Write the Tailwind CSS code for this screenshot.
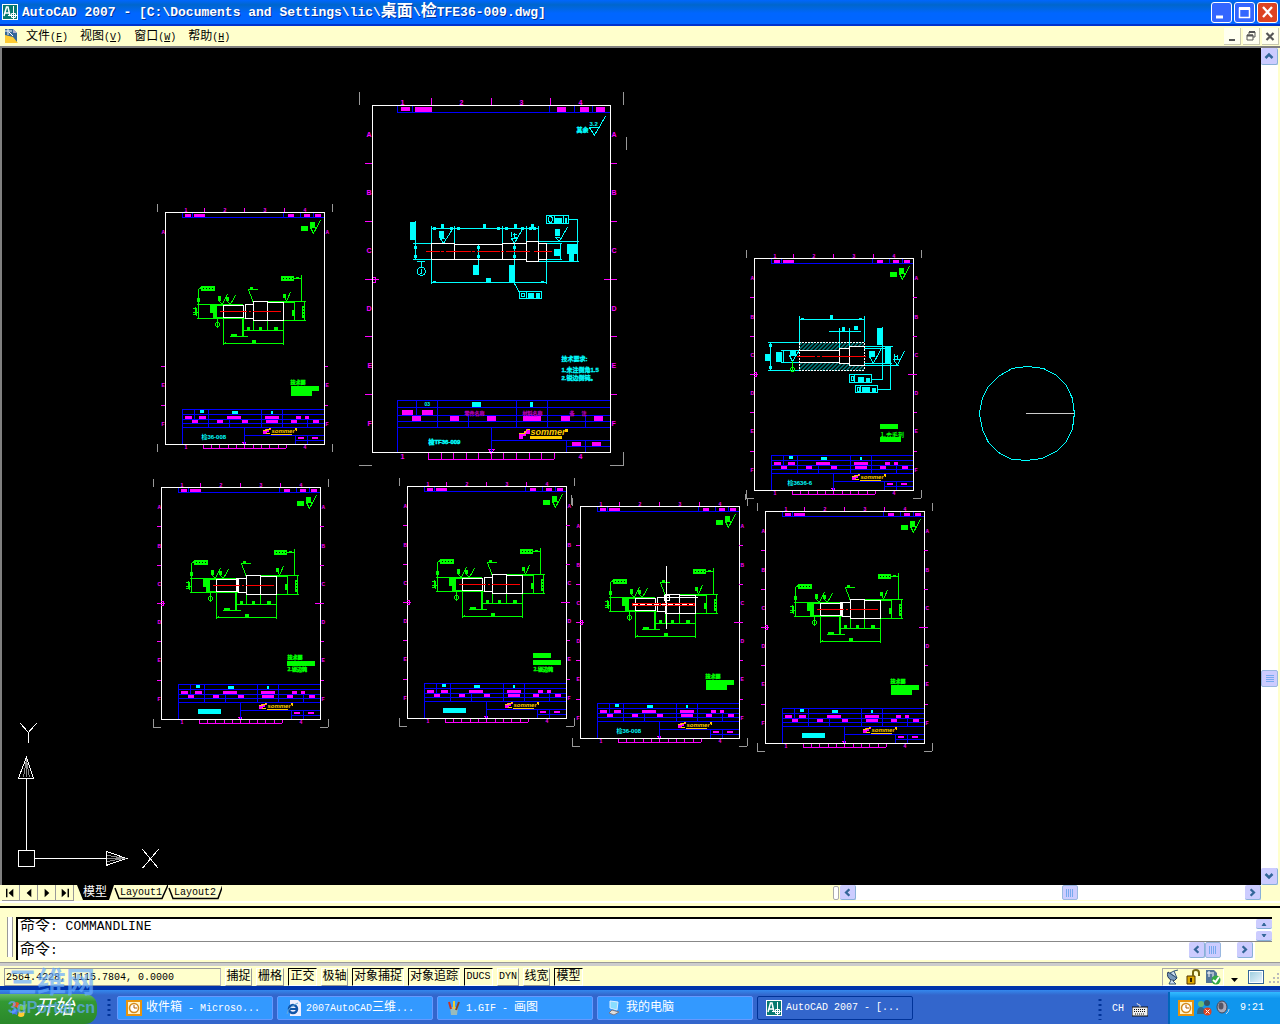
<!DOCTYPE html>
<html lang="zh-CN">
<head>
<meta charset="utf-8">
<title>AutoCAD 2007</title>
<script src="https://cdn.jsdelivr.net/npm/@tailwindcss/browser@4"></script>
</head>
<body class="flex h-screen min-h-[480px] flex-col overflow-hidden bg-[#ffffcc] font-['Liberation_Mono','Noto_Sans_CJK_SC',monospace] text-[10px] leading-4 text-black">

<!-- shared glyphs and drawing blocks -->
<svg class="absolute h-0 w-0" aria-hidden="true">
  <defs>
    <symbol id="acad" viewBox="0 0 16 16">
      <rect width="16" height="16" fill="#fff"/><rect x="1" y="1" width="14" height="14" fill="#067a70"/>
      <path d="M2 12L4.500 3H6L8 12M3 9H7" fill="none" stroke="#fff" stroke-width="1.500"/>
      <path d="M11.500 2V15M6 11.500H15M9.500 9.500H13.500V13.500H9.500Z" fill="none" stroke="#fff" stroke-width="1"/>
    </symbol>
    <symbol id="clock" viewBox="0 0 16 16">
      <rect width="16" height="16" fill="#e8930c"/><rect x="2" y="2" width="12" height="12" fill="#fff3c8"/>
      <circle cx="8" cy="8" r="4.500" fill="#fff" stroke="#d48a1c" stroke-width="1.500"/><path d="M8 5V8H11" fill="none" stroke="#b05a00"/>
    </symbol>
    <pattern id="hatch" width="4" height="4" patternUnits="userSpaceOnUse"><path d="M-1 1L1 -1M0 4L4 0M3 5L5 3" stroke="#0ff" stroke-width="1"/></pattern>

    <g id="logo">
      <path d="M98 222V219H100V217H104V216H106V218H104V220H102V222Z" fill="#f0f" stroke="none"/>
      <path d="M98 218H101V217H104V216H106M101 221H105" stroke="#fc0"/>
      <text x="106" y="221" fill="#fc0" stroke="none" font-size="6" font-style="italic" font-weight="bold" font-family="Liberation Sans">sommer</text>
      <path d="M106 222H127M131 216V219M130 216V218" stroke="#fc0"/>
    </g>

    <g id="sheet">
      <g stroke="#f0f">
        <path d="M39 -4V0M79 -4V0M119 -4V0M-4 154H0M-4 193H0M159 154H163M159 193H163M38 236H121"/>
        <path d="M38 233V236M46 233V236M54 233V236M63 233V236M71 233V236M79 233V236M88 233V236M96 233V236M104 233V236M113 233V236M121 233V236M77 230H81M78 231L79 233L80 231"/>
      </g>
      <g fill="#f0f" font-size="5" font-weight="bold" font-family="Liberation Sans">
        <text x="19" y="0">1</text><text x="58" y="0">2</text><text x="98" y="0">3</text><text x="138" y="0">4</text>
        <text x="19" y="237">1</text><text x="138" y="237">4</text>
        <text x="-4" y="22">A</text><text x="160" y="22">A</text><text x="-4" y="175">E</text><text x="160" y="175">E</text><text x="-4" y="214">F</text><text x="160" y="214">F</text>
      </g>
      <path d="M-8 -8V0M167 -8V0M-8 232V240M167 232V240" stroke="#999"/>
      <g stroke="#00f">
        <path d="M17 5H159M17 1V5M27 1V5M118 1V5M135 1V5M148 1V5"/>
        <path d="M17 232V197H159M17 202H159M17 207H159M17 211H159M17 215H159M29 197V207M43 197V215M64 207V215M96 197V215M117 197V215M142 207V215M79 215V232M79 223H159M130 223V232M130 228H159M142 223V232"/>
      </g>
      <path d="M0 0H159V232H0Z" stroke="#fff"/>
      <path fill="#f0f" d="M20 2h6v3h-6zM29 2h11v3h-11zM123 2h6v3h-6zM139 2h6v3h-6zM150 2h6v3h-6zM20 204h7v3h-7zM34 204h7v3h-7zM62 204h14v3h-14zM100 204h14v3h-14zM131 204h5v3h-5zM140 204h4v3h-4zM27 208h6v3h-6zM52 208h6v3h-6zM77 208h6v3h-6zM101 208h12v3h-12zM126 208h6v3h-6zM148 208h6v3h-6zM133 225h6v2h-6zM147 225h6v2h-6z"/>
      <path fill="#0ff" d="M35 198h4v3h-4zM67 199h6v3h-6zM106 199h2v3h-2z"/>
      <use href="#logo"/>
      <path fill="#0f0" d="M136 14h7v5h-7zM145 10h5v5h-5z"/>
      <path stroke="#0f0" d="M151 15H145L148 21L155 8"/>
    </g>

    <g id="zones">
      <path stroke="#f0f" d="M-4 39H0M-4 78H0M-4 116H4M159 39H163M159 78H163M154 116H163M0 114H2V118H0"/>
      <g fill="#f0f" font-size="5" font-weight="bold" font-family="Liberation Sans">
        <text x="-4" y="61">B</text><text x="160" y="61">B</text><text x="-4" y="99">C</text><text x="160" y="99">C</text><text x="-4" y="137">D</text><text x="160" y="137">D</text>
      </g>
    </g>
    <path id="corners" stroke="#999" d="M-8 240H0M159 240H167"/>

    <g id="shaft">
      <g stroke="#0f0">
        <path d="M29 91H75M29 105H77M45 92H56M45 104H74M30 91V105M30 91V76L33 74M51 88L54 91L59 81M59 88L62 91L67 82M90 76H80L85 89M117 85L118 88L122 79M126 65H133M133 62V88M99 88H138M104 89H126M115 107H138M126 88V107M136 88V107"/>
        <path d="M49 105V115M55 105V132M115 107V132M55 130H115M75 117H115M85 107V118M99 107V118M62 123H80M74 105V124M75 105V124M25 95H29M25 99H30M27 94V102M28 96V103M25 101H28"/>
        <circle cx="49" cy="111" r="2"/>
      </g>
      <path fill="#0f0" d="M42 91h7v9h-7zM45 91h4v14h-4zM50 83h3v5h-3zM58 84h3v4h-3zM82 74h3v2h-3zM115 81h3v4h-3zM113 63h13v5h-13zM33 73h14v5h-14zM124 97h2v6h-2zM134 93h3v12h-3zM29 85h3v4h-3zM84 127h4v3h-4zM79 114h3v3h-3zM91 114h3v3h-3zM106 114h4v3h-4zM63 121h6v3h-6zM128 64h3v2h-3zM57 129h1v2h-1z"/>
      <path stroke="#000" stroke-dasharray="1 2" d="M35 75H46M115 65H125M135 95V104"/>
      <path stroke="#fff" d="M55 92H75V104H55ZM77 91H85V105H77ZM85 88H99V107H85ZM99 89H115V107H99Z"/>
    </g>
    <path id="collar" fill="#fff" d="M75 91h3v14h-3z"/>
    <path id="axis" stroke="#f00" d="M52 98H79M81 98H83M85 98H113"/>
    <g id="notes">
      <text x="125" y="172" font-size="5" font-weight="bold" fill="#0f0" stroke="#0f0" stroke-width=".4" font-family="Noto Sans CJK SC">技术要</text>
      <path fill="#0f0" d="M126 174h28v5h-28zM126 179h21v5h-21z"/>
    </g>
    <path id="up" d="M4.500 10L8 6.500L11.500 10" fill="none" stroke="#336699" stroke-width="2.500"/>
  </defs>
</svg>

<header class="flex h-[26px] shrink-0 items-center border-b-2 border-[#0033cc] bg-linear-to-b from-[#0066ff] via-[#0066cc] via-20% to-[#0066ff] to-55% pr-0.5 pl-0.5 text-white">
  <svg class="h-4 w-4"><use href="#acad"/></svg>
  <h1 class="ml-1 flex-1 truncate text-[13px] leading-5 font-bold whitespace-pre [text-shadow:1px_1px_#003399]">AutoCAD 2007 - [C:\Documents and Settings\lic\<span class="text-[16px]">桌面</span>\<span class="text-[16px]">检</span>TFE36-009.dwg]</h1>
  <div class="flex gap-0.5">
    <button aria-label="最小化" class="h-[21px] w-[21px] rounded-[3px] border border-white bg-[#3366ff]"><svg viewBox="0 0 19 19"><path d="M4 14H11" stroke="#fff" stroke-width="3"/></svg></button>
    <button aria-label="最大化" class="h-[21px] w-[21px] rounded-[3px] border border-white bg-[#3366ff]"><svg viewBox="0 0 19 19"><path d="M4.500 5.500H14.500V14.500H4.500ZM4 5H15" fill="none" stroke="#fff" stroke-width="1.500"/><path d="M4 5.500H15" stroke="#fff" stroke-width="3"/></svg></button>
    <button aria-label="关闭" class="h-[21px] w-[21px] rounded-[3px] border border-white bg-[#dd4422]"><svg viewBox="0 0 19 19"><path d="M5 4L14 14M14 4L5 14" stroke="#fff" stroke-width="2.300"/></svg></button>
  </div>
</header>

<nav class="flex h-5 shrink-0 items-center pl-1 text-[10px]">
  <svg class="h-4 w-4" viewBox="0 0 16 16"><path d="M1 1H9L13 5V15H1Z" fill="#336699"/><path d="M9 1L13 5H9Z" fill="#aac"/><path d="M1 7L9 9L14 15H1Z" fill="#ffcc33"/><path d="M4 1V7M1 3H8M5 4L9 8" stroke="#fff" fill="none"/></svg>
  <ul class="ml-1.5 flex flex-1 gap-3 pt-0.5">
    <li><button><span class="text-xs">文件</span>(<u>F</u>)</button></li>
    <li><button><span class="text-xs">视图</span>(<u>V</u>)</button></li>
    <li><button><span class="text-xs">窗口</span>(<u>W</u>)</button></li>
    <li><button><span class="text-xs">帮助</span>(<u>H</u>)</button></li>
  </ul>
  <div class="flex gap-0.5 pr-px">
    <button aria-label="最小化文档" class="h-[17px] w-[17px] border-r border-b border-[#c8c8b0] bg-[#fffff0]"><svg viewBox="0 0 16 16"><path d="M5 12H11" stroke="#555" stroke-width="2"/></svg></button>
    <button aria-label="还原文档" class="h-[17px] w-[17px] border-r border-b border-[#c8c8b0] bg-[#fffff0]"><svg viewBox="0 0 16 16"><path d="M6 6V4H12V9H10M4 7H10V12H4Z" fill="none" stroke="#555"/><path d="M6 4H12M4 7.500H10" stroke="#555" stroke-width="2"/></svg></button>
    <button aria-label="关闭文档" class="h-[17px] w-[17px] border-r border-b border-[#c8c8b0] bg-[#fffff0]"><svg viewBox="0 0 16 16"><path d="M4.500 5L11.500 12M11.500 5L4.500 12" stroke="#555" stroke-width="2.200"/></svg></button>
  </div>
</nav>

<main class="flex min-h-0 flex-1 border-t-2 border-l-2 border-[#808080] pr-0.5">
  <svg id="sheets" class="min-w-0 flex-1 bg-black" role="img" aria-label="模型空间" fill="none" shape-rendering="crispEdges">
    <g transform="translate(-1.6 -47.6)">
      <!-- half-size inspection sheets -->
      <g transform="translate(165 212)">
        <use href="#sheet"/><use href="#shaft" x="3" y="1"/><use href="#axis" x="3" y="1"/><use href="#notes"/>
        <text x="36" y="227" font-size="6" font-weight="bold" fill="#0ff" font-family="Liberation Sans, Noto Sans CJK SC">检36-008</text>
      </g>
      <g transform="translate(161 487)">
        <use href="#sheet"/><use href="#zones"/><use href="#corners"/><use href="#shaft"/><use href="#collar"/><use href="#axis"/>
        <text x="126" y="172" font-size="5" font-weight="bold" fill="#0f0" stroke="#0f0" stroke-width=".4" font-family="Noto Sans CJK SC">技术要</text>
        <text x="126" y="184" font-size="5" font-weight="bold" fill="#0f0" stroke="#0f0" stroke-width=".4" font-family="Noto Sans CJK SC">2.锐边钝</text>
        <path fill="#0f0" d="M126 174h28v5h-28z"/><path fill="#0ff" d="M37 222h23v5h-23z"/>
      </g>
      <g transform="translate(407 486)">
        <use href="#sheet"/><use href="#zones"/><use href="#corners"/><use href="#shaft"/><use href="#axis"/>
        <text x="126" y="185" font-size="5" font-weight="bold" fill="#0f0" stroke="#0f0" stroke-width=".4" font-family="Noto Sans CJK SC">2.锐边钝</text>
        <path fill="#0f0" d="M126 167h18v5h-18zM126 174h28v5h-28z"/><path fill="#0ff" d="M36 222h23v5h-23z"/>
      </g>
      <g transform="translate(580 506)">
        <use href="#sheet"/><use href="#zones"/><use href="#corners"/><use href="#shaft"/><use href="#notes"/>
        <path stroke="#f00" d="M52 97H80V99H52ZM82 97H114V99H82Z"/><path stroke="#fff" stroke-dasharray="5 2" d="M53 98H113"/>
        <text x="36" y="227" font-size="6" font-weight="bold" fill="#0ff" font-family="Liberation Sans, Noto Sans CJK SC">检36-008</text>
      </g>
      <g transform="translate(765 511)">
        <use href="#sheet"/><use href="#zones"/><use href="#corners"/><use href="#shaft"/><use href="#collar"/><use href="#axis"/><use href="#notes"/>
        <path fill="#0ff" d="M37 222h23v5h-23z"/>
      </g>

      <!-- sleeve sheet -->
      <g transform="translate(754 258)">
        <use href="#sheet"/><use href="#zones"/><use href="#corners"/>
        <path fill="#0f0" d="M126 166h18v5h-18zM126 179h21v5h-21z"/>
        <text x="126" y="179" font-size="6" font-weight="bold" fill="#0f0" font-family="Noto Sans CJK SC">1.去毛刺</text>
        <text x="33" y="227" font-size="6" font-weight="bold" fill="#0ff" font-family="Liberation Sans, Noto Sans CJK SC">检3636-6</text>
      </g>
      <path fill="url(#hatch)" d="M799 342h65v5h-15v2h-10v2h-40zM799 362h40v2h10v2h15v5h-65z"/>
      <g stroke="#0ff">
        <path d="M799 319H864M799 316V342M864 316V342M829 331H861M839 328V348M849 328V346M768 342H799M768 370H799M770 342V370M781 350H799M781 362H799M783 350V362M789 355H796M789 355L792 361L799 350"/>
        <path d="M882 327V379H872M849 374H871V382H849ZM855 385H877V392H855ZM877 389H890V346M864 346H893M864 365H899M864 348H885M864 363H892M869 356H875M869 356L873 363L881 348M893 359H900M893 359L897 365L904 351M894 354V359M897 355V359M895 356H898M854 374V382M851 376H853V380H851ZM860 385V392M857 387H859V391H857Z"/>
      </g>
      <path fill="#0ff" d="M830 315h3v4h-3zM842 327h3v4h-3zM854 326h4v4h-4zM765 354h6v7h-6zM776 352h6v10h-6zM790 350h6v5h-6zM877 328h5v17h-5zM885 347h6v17h-6zM869 351h6v5h-6zM858 377h6v5h-6zM866 378h4v4h-4zM862 387h8v5h-8zM872 388h4v4h-4zM769 344h3v3h-3zM769 366h3v3h-3zM801 318h3v2h-3zM859 318h3v2h-3z"/>
      <path stroke="#fff" d="M799 350H839M799 362H839M839 348V363M839 348H849M839 363H849M849 346V365M849 346H864M849 365H864"/>
      <path stroke="#fff" stroke-dasharray="2 1" d="M799 342H864V370H799Z"/>
      <path stroke="#f00" d="M797 356H815M817 356H820M822 356H866"/>
      <g stroke="#0f0"><circle cx="792" cy="369" r="2"/><path d="M792 361V372"/></g>

      <!-- main shaft sheet -->
      <path stroke="#999" d="M359 92V105M623 92V105M626 137V150M359 465H372M610 465H623V452M571 495V505M745 500V494"/>
      <g stroke="#f0f">
        <path d="M431 98V105M491 98V105M550 98V105M365 163H372M365 221H372M365 279H379M365 336H372M365 394H372M611 163H617M611 221H617M604 279H617M611 336H617M611 394H617M372 277H375V282H372"/>
        <path d="M428 459H554M428 453V459M441 453V459M453 453V459M466 453V459M478 453V459M491 453V459M503 453V459M516 453V459M529 453V459M541 453V459M554 453V459M488 449H495M489 450L491 454L493 450"/>
      </g>
      <g fill="#f0f" font-size="7" font-weight="bold" font-family="Liberation Sans">
        <text x="400" y="105">1</text><text x="459" y="105">2</text><text x="519" y="105">3</text><text x="578" y="105">4</text><text x="400" y="459">1</text><text x="578" y="459">4</text>
        <text x="366" y="137">A</text><text x="366" y="195">B</text><text x="366" y="253">C</text><text x="366" y="311">D</text><text x="367" y="368">E</text><text x="367" y="426">F</text>
        <text x="611" y="137">A</text><text x="611" y="195">B</text><text x="611" y="253">C</text><text x="611" y="311">D</text><text x="611" y="368">E</text><text x="611" y="426">F</text>
      </g>
      <path stroke="#00f" d="M397 112H610M397 106V112M412 106V112M549 106V112M574 106V112M592 106V112M397 452V400H610M397 407H610M397 415H610M397 421H610M397 427H610M416 400V415M437 400V427M468 415V427M516 400V427M547 400V427M585 415V427M491 427V452M491 440H610M566 440V452M566 446H610M585 440V452"/>
      <path stroke="#fff" d="M372 105H610V452H372Z"/>
      <path fill="#f0f" d="M401 107h9v4h-9zM415 107h17v5h-17zM557 107h9v5h-9zM580 107h9v5h-9zM596 107h9v5h-9zM402 410h11v5h-11zM422 410h11v5h-11zM412 416h9v5h-9zM450 416h9v5h-9zM487 416h9v5h-9zM523 416h18v5h-18zM561 416h9v5h-9zM594 416h9v5h-9zM572 442h9v4h-9zM592 442h9v4h-9z"/>
      <g fill="#b000b0" stroke="#b000b0" stroke-width=".3" font-size="5" font-family="Noto Sans CJK SC"><text x="464" y="415">零件名称</text><text x="522" y="415">材料名称</text><text x="569" y="415">备</text><text x="581" y="415">注</text></g>
      <path fill="#0ff" d="M472 402h9v5h-9zM530 402h3v5h-3z"/>
      <g fill="#0ff" font-weight="bold" font-family="Liberation Sans, Noto Sans CJK SC">
        <text x="424" y="406" font-size="5">03</text>
        <text x="428" y="444" font-size="6" stroke="#0ff" stroke-width=".4">检TF36-009</text>
        <text x="576" y="132" font-size="6" stroke="#0ff" stroke-width=".4">其余</text><text x="589" y="126" font-size="6">3.2</text>
        <text x="561" y="361" font-size="6" stroke="#0ff" stroke-width=".3">技术要求:</text>
        <text x="561" y="372" font-size="6" stroke="#0ff" stroke-width=".3">1.未注倒角1.5</text>
        <text x="561" y="380" font-size="6" stroke="#0ff" stroke-width=".3">2.锐边倒钝。</text>
      </g>
      <path fill="#f0f" d="M519 439V434H522V433H524V431H526V429H530V434H526V436H523V438Z"/>
      <path stroke="#fc0" d="M519 433H524L527 429H530"/>
      <path fill="#fc0" d="M530 436h32v3h-32zM565 429h3v3h-3z"/>
      <text x="530" y="435" fill="#fc0" font-size="9" font-style="italic" font-weight="bold" font-family="Liberation Sans">sommer</text>
      <g stroke="#0ff">
        <path d="M599 127H589L594 135L605 116M431 228H538M431 226V243M454 226V243M502 226V243M526 226V241M538 226V241M431 259V284M546 243V284M431 282H546M415 221V259M413 243H431M413 259H431M417 261H425M421 261V267"/>
        <circle cx="421" cy="271" r="4"/><path d="M420 273H421V269"/>
        <path d="M445 238H440L443 243L452 229M517 238H511L514 243L522 229M511 232V237M514 233V237H517M513 234H517M560 237H555L559 241L567 227M478 244V265M514 243V265M514 283L519 292M519 291H541V298H519ZM526 291V298M521 293H524V296H521ZM546 215H568V223H546ZM554 215V223M563 215V223M568 219H577V261M538 241H579M538 261H579M546 243H562M546 259H562M560 243V259"/>
        <ellipse cx="550" cy="219" rx="2" ry="3"/>
      </g>
      <path fill="#0ff" d="M441 224h3v4h-3zM483 224h3v4h-3zM514 224h3v4h-3zM531 224h3v4h-3zM433 227h3v3h-3zM450 227h3v3h-3zM457 227h3v3h-3zM497 227h3v3h-3zM505 227h3v3h-3zM521 227h3v3h-3zM529 227h3v3h-3zM533 227h3v3h-3zM410 222h6v18h-6zM414 246h3v3h-3zM414 255h3v3h-3zM439 231h5v7h-5zM555 229h5v7h-5zM473 265h6v10h-6zM509 265h6v18h-6zM486 278h5v4h-5zM433 281h3v2h-3zM541 281h3v2h-3zM528 293h6v5h-6zM536 293h4v5h-4zM555 218h7v5h-7zM565 218h2v5h-2zM554 249h6v7h-6zM567 244h11v10h-11zM569 254h5v8h-5zM477 246h3v3h-3zM477 255h3v3h-3zM513 246h3v3h-3zM513 255h3v3h-3z"/>
      <path stroke="#fff" d="M431 243H454V259H431ZM454 244H502V259H454ZM502 243H526V259H502ZM526 241H538V261H526ZM538 243H546V259H538Z"/>
      <path stroke="#f00" d="M426 251H440M441 251H444M446 251H471M472 251H475M477 251H500M501 251H504M506 251H530M534 251H552"/>

      <!-- crosshair with pickbox -->
      <path stroke="#fff" d="M666 566V629M663 597H698M664 595H669V600H664Z"/>

      <!-- disc -->
      <path stroke="#0ff" d="M1074 413L1072 398L1066 385L1056 375L1043 368L1027 366L1012 368L998 376L988 386L982 398L979 413L982 429L988 442L998 452L1011 459L1027 460L1042 458L1056 451L1066 441L1072 429Z"/>
      <path stroke="#ccc" d="M1026 413H1074"/>

      <!-- UCS icon -->
      <path stroke="#fff" d="M20 723L28 732L36 723M28 732V743M18 778H33L26 757ZM26 778V850M18 850H34V866H18ZM34 858H106M106 851V865L126 858ZM142 849L158 868M158 849L142 868"/>
      <path stroke="#888" d="M26 759L23 777M26 759L29 777M26 759V777M124 858L107 855M124 858L107 861M107 858H126"/>
    </g>
  </svg>
  <div class="flex w-[17px] shrink-0 flex-col bg-white" role="scrollbar" aria-label="垂直滚动" aria-controls="sheets" aria-valuenow="75">
    <button aria-label="上" class="h-[17px] rounded-xs border-r border-b border-[#88b0d8] bg-[#ccccff]"><svg viewBox="0 0 16 16"><use href="#up"/></svg></button>
    <div class="grow-[605]"></div>
    <div class="flex h-[17px] items-center justify-center rounded-xs border border-[#99b8e0] bg-[#ccccff]"><svg class="h-2 w-2" viewBox="0 0 8 8"><path d="M0 .5H8M0 2.500H8M0 4.500H8M0 6.500H8" stroke="#77aaee"/></svg></div>
    <div class="grow-[181]"></div>
    <button aria-label="下" class="h-[17px] rounded-xs border-r border-b border-[#88b0d8] bg-[#ccccff]"><svg class="rotate-180" viewBox="0 0 16 16"><use href="#up"/></svg></button>
  </div>
</main>

<section class="flex h-4 shrink-0 pl-0.5">
  <div class="flex">
    <button aria-label="首个" class="h-4 w-[18px] border-r border-b border-[#999]"><svg viewBox="0 0 18 16"><path d="M5 4V13" stroke="#000" stroke-width="1.500"/><path d="M12 4V13L7 8.500Z"/></svg></button>
    <button aria-label="上一个" class="h-4 w-[18px] border-r border-b border-[#999]"><svg viewBox="0 0 18 16"><path d="M12 4V13L7 8.500Z"/></svg></button>
    <button aria-label="下一个" class="h-4 w-[18px] border-r border-b border-[#999]"><svg viewBox="0 0 18 16"><path d="M7 4V13L12 8.500Z"/></svg></button>
    <button aria-label="末个" class="h-4 w-[18px] border-r border-b border-[#999]"><svg viewBox="0 0 18 16"><path d="M13 4V13" stroke="#000" stroke-width="1.500"/><path d="M6 4V13L11 8.500Z"/></svg></button>
  </div>
  <div class="ml-0.5 flex">
    <button class="relative h-4 w-[38px] text-xs leading-4 text-white"><svg class="absolute inset-0 h-4 w-[38px]" viewBox="0 0 38 16"><path d="M1 0H38L33 15H7Z"/></svg><span class="relative">模型</span></button>
    <button class="relative h-4 w-[54px]"><svg class="absolute inset-0 h-4 w-[54px]" viewBox="0 0 54 16" fill="none" stroke="#000"><path d="M1 3L5 13.500H48L54 0" stroke-width="1.500"/></svg><span class="relative">Layout1</span></button>
    <button class="relative h-4 w-[54px]"><svg class="absolute inset-0 h-4 w-[54px]" viewBox="0 0 54 16" fill="none" stroke="#000"><path d="M1 3L5 13.500H50L55 0" stroke-width="1.500"/></svg><span class="relative">Layout2</span></button>
  </div>
  <div class="ml-auto flex w-[35%] pr-[19px]" role="scrollbar" aria-label="水平滚动" aria-controls="sheets" aria-valuenow="55">
    <div class="mt-px mr-px h-[14px] w-1.5 rounded-xs border border-[#aaa] bg-white"></div>
    <div class="flex h-[15px] flex-1 bg-white">
      <button aria-label="左" class="w-4 rounded-xs border-r border-b border-[#88b0d8] bg-[#ccccff]"><svg class="-rotate-90" viewBox="0 0 16 16"><use href="#up"/></svg></button>
      <div class="grow-[207]"></div>
      <div class="flex w-4 items-center justify-center rounded-xs border border-[#99b8e0] bg-[#ccccff]"><svg class="h-2 w-2" viewBox="0 0 8 8"><path d="M.5 0V8M2.500 0V8M4.500 0V8M6.500 0V8" stroke="#77aaee"/></svg></div>
      <div class="grow-[167]"></div>
      <button aria-label="右" class="w-4 rounded-xs border-r border-b border-[#88b0d8] bg-[#ccccff]"><svg class="rotate-90" viewBox="0 0 16 16"><use href="#up"/></svg></button>
    </div>
  </div>
</section>
<div class="h-[7px] shrink-0 border-t-2 border-b-2 border-t-white border-b-black"></div>

<section class="flex h-[54px] shrink-0 items-start pt-[9px]">
  <div class="mr-[3px] ml-[7px] h-10 w-1.5 border-r border-l border-[#999] bg-white"></div>
  <div class="flex h-[43px] min-w-0 flex-1 flex-col border-t-2 border-l-2 border-black bg-white text-[13px] leading-4">
    <div class="flex h-[23px] border-b border-[#888]">
      <p class="flex-1 pl-0.5 whitespace-pre"><span class="text-[15px]">命令</span>: COMMANDLINE</p>
      <div class="flex w-4 flex-col gap-0.5">
        <button aria-label="上滚" class="flex h-2.5 items-center justify-center rounded-xs border-b border-[#88b0d8] bg-[#ccccff]"><svg class="h-1 w-1.5" viewBox="0 0 6 4"><path d="M1 4L3 1L5 4" fill="#336699" stroke="#336699"/></svg></button>
        <button aria-label="下滚" class="flex h-2.5 items-center justify-center rounded-xs border-b border-[#88b0d8] bg-[#ccccff]"><svg class="h-1 w-1.5" viewBox="0 0 6 4"><path d="M1 0L3 3L5 0" fill="#336699" stroke="#336699"/></svg></button>
      </div>
    </div>
    <div class="flex h-[18px]">
      <label for="cmd" class="pt-px pl-0.5 whitespace-pre"><span class="text-[15px]">命令</span>:</label>
      <input id="cmd" class="min-w-0 flex-1 bg-transparent px-1 outline-none">
      <div class="flex h-[18px] w-[67px] bg-white pl-px">
        <button aria-label="左滚" class="h-4 w-4 rounded-xs border-r border-b border-[#88b0d8] bg-[#ccccff]"><svg class="-rotate-90" viewBox="0 0 16 16"><use href="#up"/></svg></button>
        <div class="flex h-4 w-4 items-center justify-center rounded-xs border border-[#99b8e0] bg-[#ccccff]"><svg class="h-2 w-2" viewBox="0 0 8 8"><path d="M.5 0V8M2.500 0V8M4.500 0V8M6.500 0V8" stroke="#77aaee"/></svg></div>
        <button aria-label="右滚" class="ml-4 h-4 w-4 rounded-xs border-r border-b border-[#88b0d8] bg-[#ccccff]"><svg class="rotate-90" viewBox="0 0 16 16"><use href="#up"/></svg></button>
      </div>
      <div class="w-[17px] bg-[#ffffcc]"></div>
    </div>
  </div>
  <div class="w-2"></div>
</section>

<section class="relative flex h-6 shrink-0 items-center border-t border-[#999] bg-[#cccccc] bg-linear-to-b from-[#cccccc] from-15% via-[#ffffcc] via-15% to-[#ffffcc] to-80% pt-1 pl-1">
  <output class="h-[18px] w-[217px] border border-[#999] border-r-[#bbb] pl-px leading-[18px] whitespace-pre">2564.4228, 1115.7804, 0.0000</output>
  <div class="ml-1 flex gap-1 text-xs leading-4 [&>button]:h-[18px] [&>button]:border [&>button]:whitespace-nowrap">
    <button class="w-[27px] border-white border-r-[#999] border-b-[#999]">捕捉</button>
    <button class="w-[28px] border-white border-r-[#999] border-b-[#999]">栅格</button>
    <button class="w-[29px] border-white border-t-black border-l-black" aria-pressed="true">正交</button>
    <button class="w-[27px] border-white border-r-[#999] border-b-[#999]">极轴</button>
    <button class="w-[52px] border-white border-t-black border-l-black" aria-pressed="true">对象捕捉</button>
    <button class="w-[52px] border-white border-t-black border-l-black" aria-pressed="true">对象追踪</button>
    <button class="w-[29px] border-white border-t-black border-l-black text-[10px]" aria-pressed="true">DUCS</button>
    <button class="w-[22px] border-white border-r-[#999] border-b-[#999] text-[10px]">DYN</button>
    <button class="w-[27px] border-white border-r-[#999] border-b-[#999]">线宽</button>
    <button class="w-[29px] border-white border-t-black border-l-black" aria-pressed="true">模型</button>
  </div>
  <div class="ml-auto flex items-center gap-1">
    <div class="flex gap-1 border border-white border-t-[#aaa] border-l-[#aaa] px-0.5">
      <svg class="h-4 w-4" viewBox="0 0 16 16"><path d="M3 3Q1 8 6 11Q10 13 12 9Z" fill="#7799bb" stroke="#223355"/><path d="M5 4L12 9L9 2ZM9 2L13 1M8 12L11 15H4L6 11" fill="#ccddee" stroke="#335577"/></svg>
      <svg class="h-4 w-4" viewBox="0 0 16 16"><path d="M2 7H10V15H2Z" fill="#ddaa00" stroke="#553300"/><path d="M8 7V3Q8 1 11 1Q14 1 14 4V7" fill="none" stroke="#776611" stroke-width="2"/><path d="M6 9V13" stroke="#332200" stroke-width="2"/></svg>
      <svg class="h-4 w-4" viewBox="0 0 16 16"><path d="M1 1H9L12 4V14H1Z" fill="#557799"/><path d="M4 2V8M2 4H7M8 3V8" stroke="#fff"/><circle cx="11" cy="11" r="4.500" fill="#33aa44"/><path d="M8 11L10.500 13L14 8" fill="none" stroke="#fff" stroke-width="2"/></svg>
    </div>
    <button aria-label="状态栏菜单" class="h-3 w-3"><svg viewBox="0 0 12 12"><path d="M3 7H10L6.500 11Z"/></svg></button>
    <button aria-label="全屏显示" class="ml-1 h-[14px] w-4 border border-[#336699] bg-linear-to-br from-[#99ccdd] to-[#eef6ff] outline outline-white -outline-offset-2"></button>
    <svg class="h-4 w-3" viewBox="0 0 12 16"><path d="M10 4V6M10 8V10M10 12V14M6 8V10M6 12V14M2 12V14" stroke="#bbb" stroke-width="2"/></svg>
  </div>
</section>

<footer class="relative flex h-[38px] shrink-0 items-end border-t-4 border-[#0033aa] bg-[#3366cc] bg-linear-to-b from-[#3388ee] to-[#3366cc] to-15% text-[10px] text-white">
  <button class="flex h-[30px] w-[97px] items-center gap-1.5 rounded-r-xl bg-linear-to-b from-[#66bb66] via-[#339933] via-25% to-[#2a882a] pl-3 text-xl italic">
    <svg class="h-5 w-4" viewBox="0 0 16 18"><path d="M1 3Q4 1 7 3L6 8Q3 6 0 8Z" fill="#ee5522"/><path d="M8 4Q11 6 15 4L14 9Q10 11 7 9Z" fill="#77cc33"/><path d="M0 10Q3 8 6 10L5 15Q2 13 -1 15Z" fill="#4477ee"/><path d="M7 11Q10 13 13 11L12 16Q9 18 6 16Z" fill="#ffcc33"/></svg>
    <span>开始</span>
  </button>
  <svg class="ml-2 h-8 w-2" viewBox="0 0 8 32"><path d="M4 7V27" stroke="#003399" stroke-width="3" stroke-dasharray="2 3"/></svg>
  <div class="mb-1 ml-1 flex min-w-0 gap-1 [&>button]:flex [&>button]:h-6 [&>button]:w-[156px] [&>button]:items-center [&>button]:gap-1 [&>button]:rounded-xs [&>button]:border [&>button]:pl-2 [&>button]:whitespace-pre">
    <button class="border-[#6699ff] bg-[#3399ff]"><svg class="h-4 w-4"><use href="#clock"/></svg><span><span class="text-xs">收件箱</span> - Microso...</span></button>
    <button class="border-[#6699ff] bg-[#3399ff]"><svg class="h-4 w-4" viewBox="0 0 16 16"><path d="M4 0H12L15 3V16H4Z" fill="#eef"/><circle cx="7" cy="9" r="4" fill="none" stroke="#1155aa" stroke-width="2.500"/><path d="M4 9H11" stroke="#1155aa" stroke-width="2"/><path d="M1 14Q2 7 12 3" fill="none" stroke="#66aadd"/></svg><span>2007AutoCAD<span class="text-xs">三维</span>...</span></button>
    <button class="border-[#6699ff] bg-[#3399ff]"><svg class="h-4 w-4" viewBox="0 0 16 16"><path d="M4 7H12L11 15H5Z" fill="#99bbbb"/><path d="M5 9L3 2" stroke="#cc3322" stroke-width="2"/><path d="M8 9V1" stroke="#eecc33" stroke-width="2"/><path d="M10 10L13 2" stroke="#884422" stroke-width="2"/></svg><span>1.GIF - <span class="text-xs">画图</span></span></button>
    <button class="border-[#6699ff] bg-[#3399ff]"><svg class="h-4 w-4" viewBox="0 0 16 16"><path d="M4 1L12 2L11 10L4 8Z" fill="#88ddff" stroke="#ddeeff"/><path d="M6 10L13 12L8 15L3 13Z" fill="#ddd" stroke="#778"/></svg><span class="text-xs">我的电脑</span></button>
    <button class="border-[#003399] bg-[#3366cc]"><svg class="h-4 w-4"><use href="#acad"/></svg><span>AutoCAD 2007 - [...</span></button>
  </div>
  <div class="ml-auto flex h-[30px] items-center gap-2 pr-5">
    <svg class="h-7 w-2" viewBox="0 0 8 28"><path d="M4 4V25" stroke="#003399" stroke-width="3" stroke-dasharray="2 3"/></svg>
    <span>CH</span>
    <svg class="h-4 w-4" viewBox="0 0 16 16"><path d="M0 6H16V15H0Z" fill="#eee" stroke="#111"/><path d="M2 8.500H14M2 10.500H14M3 13H13" stroke="#111" stroke-dasharray="1 1"/><path d="M8 6V4Q5 4 5 2" fill="none" stroke="#ddd"/></svg>
  </div>
  <div class="flex h-8 w-[112px] items-center gap-0.5 border-l-2 border-[#0066bb] bg-linear-to-b from-[#33bbff] to-[#0f96ee] to-20% pl-2">
    <svg class="h-4 w-4"><use href="#clock"/></svg>
    <svg class="h-4 w-4" viewBox="0 0 16 16"><circle cx="5" cy="4" r="3" fill="#66bb77"/><path d="M1 14Q1 7 5 7Q9 7 9 14Z" fill="#336688"/><circle cx="11" cy="3" r="3" fill="#335566"/><circle cx="11.500" cy="11.500" r="4" fill="#dd4422"/><path d="M9.500 9.500L13.500 13.500M13.500 9.500L9.500 13.500" stroke="#fff"/></svg>
    <svg class="h-4 w-4" viewBox="0 0 16 16"><ellipse cx="8" cy="7" rx="5" ry="6" fill="#aab" stroke="#445"/><ellipse cx="7" cy="6" rx="2.500" ry="3.500" fill="#556"/><path d="M12 14Q15 12 15 9" fill="none" stroke="#ccd"/></svg>
    <time class="ml-2">9:21</time>
  </div>
  <div class="pointer-events-none absolute -top-4 left-2 text-[#66aaff]/70">
    <p class="text-[29px] leading-6 font-bold">三维网</p>
    <p class="font-['Liberation_Sans'] text-base leading-5 font-bold">3dPortal.cn</p>
  </div>
</footer>
</body>
</html>
